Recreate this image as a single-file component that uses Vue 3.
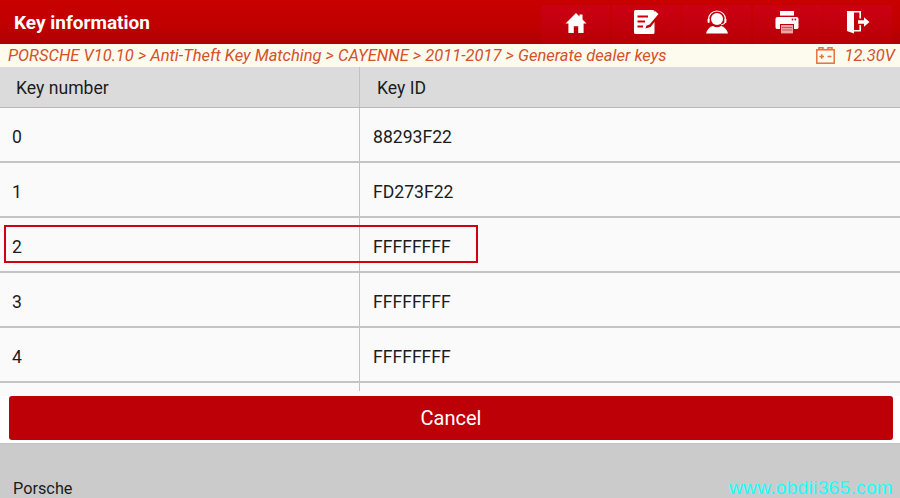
<script setup>
const crumbs = 'PORSCHE V10.10 > Anti-Theft Key Matching > CAYENNE > 2011-2017 > Generate dealer keys'

const rows = [
  { no: '0', id: '88293F22' },
  { no: '1', id: 'FD273F22' },
  { no: '2', id: 'FFFFFFFF' },
  { no: '3', id: 'FFFFFFFF' },
  { no: '4', id: 'FFFFFFFF' },
]
</script>

<template>
  <div class="page">
    <header class="topbar">
      <h1 class="title">Key information</h1>
      <div class="tools">
        <button class="tool">
          <!-- home -->
          <svg class="home" width="22" height="22" viewBox="0 0 22 22">
            <path fill="#fff" d="M11 1 L14.5 4.5 V2.5 H17.5 V7.5 L21.5 11.5 L18.6 11.5 L18.6 21 L13.2 21 L13.2 14.2 L8.8 14.2 L8.8 21 L3.4 21 L3.4 11.5 L.5 11.5 Z" />
          </svg>
        </button>
        <button class="tool">
          <!-- report / edit -->
          <svg width="26" height="26" viewBox="0 0 26 26">
            <path fill="#fff" d="M2.5 1 H20 Q21.5 1 21.5 2.5 V6 L14 14.5 L12.5 19.5 L17.5 18 L21.5 13 V23.5 Q21.5 25 20 25 H2.5 Q1 25 1 23.5 V2.5 Q1 1 2.5 1 Z" />
            <path fill="none" stroke="#c5000b" stroke-width="1.8" d="M4.5 7.5 H15 M4.5 12.5 H12 M4.5 17.5 H10" />
            <path fill="#fff" d="M22 2 L25.5 5 L16.6 15.6 L13 16.8 L14 13 Z" />
          </svg>
        </button>
        <button class="tool">
          <!-- headset agent -->
          <svg width="24" height="24" viewBox="0 0 24 24">
            <circle cx="12" cy="9" r="6" fill="#fff" />
            <path fill="none" stroke="#fff" stroke-width="1.2" d="M3.6 11.5 V9 A8.4 8 0 0 1 20.4 9 V11.5 Q20 14 16 15" />
            <rect x="2.6" y="8.6" width="2" height="4.4" rx="1" fill="#fff" />
            <rect x="19.4" y="8.6" width="2" height="4.4" rx="1" fill="#fff" />
            <path fill="#fff" d="M8 16 Q12 18.5 16 16 Q21 17 23 23.5 H1 Q3 17 8 16 Z" />
          </svg>
        </button>
        <button class="tool">
          <!-- printer -->
          <svg width="24" height="24" viewBox="0 0 24 24">
            <rect x="5" y="1" width="14" height="4.6" fill="#fff" />
            <path fill="#fff" d="M2.5 7 H21.5 Q23.5 7 23.5 9 V17.5 Q23.5 19 21.5 19 H19 V14 H5 V19 H2.5 Q.5 19 .5 17.5 V9 Q.5 7 2.5 7 Z" />
            <rect x="6" y="15" width="12" height="8.4" fill="#eda5a8" />
            <path stroke="#d5505a" stroke-width="1" d="M7 17.5 H17 M7 20 H17" />
            <circle cx="17.5" cy="9.5" r=".9" fill="#c5000b" />
            <circle cx="20.3" cy="9.5" r=".9" fill="#c5000b" />
          </svg>
        </button>
        <button class="tool">
          <!-- exit -->
          <svg width="24" height="24" viewBox="0 0 24 24">
            <path fill="#fff" d="M1 1 H15 V8.6 H13.4 V2.6 H8 V20 H13.4 V15 H15 V21.5 H8 V23.5 L1 21 Z" />
            <path fill="#fff" d="M12 10.3 H18 V7.2 L23.5 12 L18 16.8 V13.7 H12 Z" />
          </svg>
        </button>
      </div>
    </header>

    <div class="crumbs">
      <span class="path">{{ crumbs }}</span>
      <span class="volt">
        <svg width="19" height="17" viewBox="0 0 19 17">
          <rect x=".8" y="2.8" width="17.4" height="13.4" fill="none" stroke="#e8703f" stroke-width="1.5" />
          <path fill="none" stroke="#e8703f" stroke-width="1.5" d="M3 2.5 V.8 H7 V2.5 M12 2.5 V.8 H16 V2.5 M3.4 9.5 H8 M5.7 7.2 V11.8 M11.5 9.5 H15.5" />
        </svg>
        12.30V
      </span>
    </div>

    <section class="table">
      <div class="row head">
        <div class="cell first">Key number</div>
        <div class="cell second">Key ID</div>
      </div>
      <div v-for="row in rows" :key="row.no" class="row body">
        <div class="cell first">{{ row.no }}</div>
        <div class="cell second">{{ row.id }}</div>
      </div>
      <div class="row tail">
        <div class="cell first"></div>
        <div class="cell second"></div>
      </div>
      <div class="highlight"></div>
    </section>

    <div class="actions">
      <button class="cancel">Cancel</button>
    </div>

    <footer class="footer">
      <span class="make">Porsche</span>
      <span class="mark">www.obdii365.com</span>
    </footer>
  </div>
</template>

<style>
html,
body {
  margin: 0;
  background: #fff;
}
</style>

<style scoped>
.page {
  width: 900px;
  height: 498px;
  display: flex;
  flex-direction: column;
  overflow: hidden;
  font-family: Roboto, "Liberation Sans", sans-serif;
  color: #1c1c1c;
}

.topbar {
  height: 44px;
  flex: none;
  display: flex;
  justify-content: space-between;
  background: linear-gradient(#c80000, #c00000 60%, #ae0006);
}

.title {
  margin: 0;
  padding: 0 0 0 14px;
  font-size: 19px;
  font-weight: 700;
  line-height: 45px;
  color: #fff;
}

.tools {
  display: flex;
  gap: 1.5px;
  padding: 5px 8px 0 0;
}

.tool {
  width: 69px;
  height: 39px;
  padding: 0 0 5px;
  border: 0;
  display: flex;
  align-items: center;
  justify-content: center;
  background: linear-gradient(#cc0014, #b80004);
}

.home {
  margin-top: 2px;
}

.crumbs {
  height: 23px;
  flex: none;
  padding: 0 5px 0 8px;
  display: flex;
  align-items: center;
  justify-content: space-between;
  background: #fdfbee;
  font-size: 16.5px;
  font-style: italic;
  color: #d4512a;
  white-space: nowrap;
}

.volt {
  display: flex;
  align-items: center;
  gap: 10px;
  font-size: 16.5px;
}

.table {
  position: relative;
  height: 329px;
  flex: none;
  background: #fafafa;
}

.row {
  display: flex;
  box-sizing: border-box;
}

.cell {
  display: flex;
  align-items: center;
  font-size: 17.6px;
}

.first {
  width: 360px;
  box-sizing: border-box;
  padding-left: 12px;
  border-right: 1px solid #c2c2c2;
}

.second {
  flex: 1;
  padding-left: 13px;
}

.head {
  height: 41px;
  background: #dbdbdb;
  border-bottom: 1px solid #b8b8b8;
}

.head .cell {
  padding-top: 2px;
}

.head .first {
  padding-left: 16px;
}

.head .second {
  padding-left: 17px;
}

.body {
  height: 55px;
  border-bottom: 2px solid #c4c4c4;
}

.body .cell {
  padding-top: 4px;
}

.tail {
  height: 13px;
}

.tail .first {
  height: 8px;
}

.highlight {
  position: absolute;
  left: 4px;
  top: 158px;
  width: 470px;
  height: 34px;
  border: 2px solid #d00010;
}

.actions {
  height: 47px;
  flex: none;
  padding: 0 7px 3px 9px;
  box-sizing: border-box;
}

.cancel {
  width: 100%;
  height: 44px;
  border: 0;
  border-radius: 3px;
  background: #bd0008;
  color: #fff;
  font-family: inherit;
  font-size: 20px;
}

.footer {
  flex: 1;
  padding: 0 7px 0 13px;
  display: flex;
  align-items: flex-end;
  justify-content: space-between;
  background: #cbcbcb;
  border-top: 1px solid #c2c2c2;
}

.make {
  font-size: 16.3px;
  line-height: 18px;
}

.mark {
  font-family: "Liberation Sans", sans-serif;
  font-size: 19px;
  letter-spacing: 0.35px;
  line-height: 20px;
  color: #19ffff;
}
</style>
